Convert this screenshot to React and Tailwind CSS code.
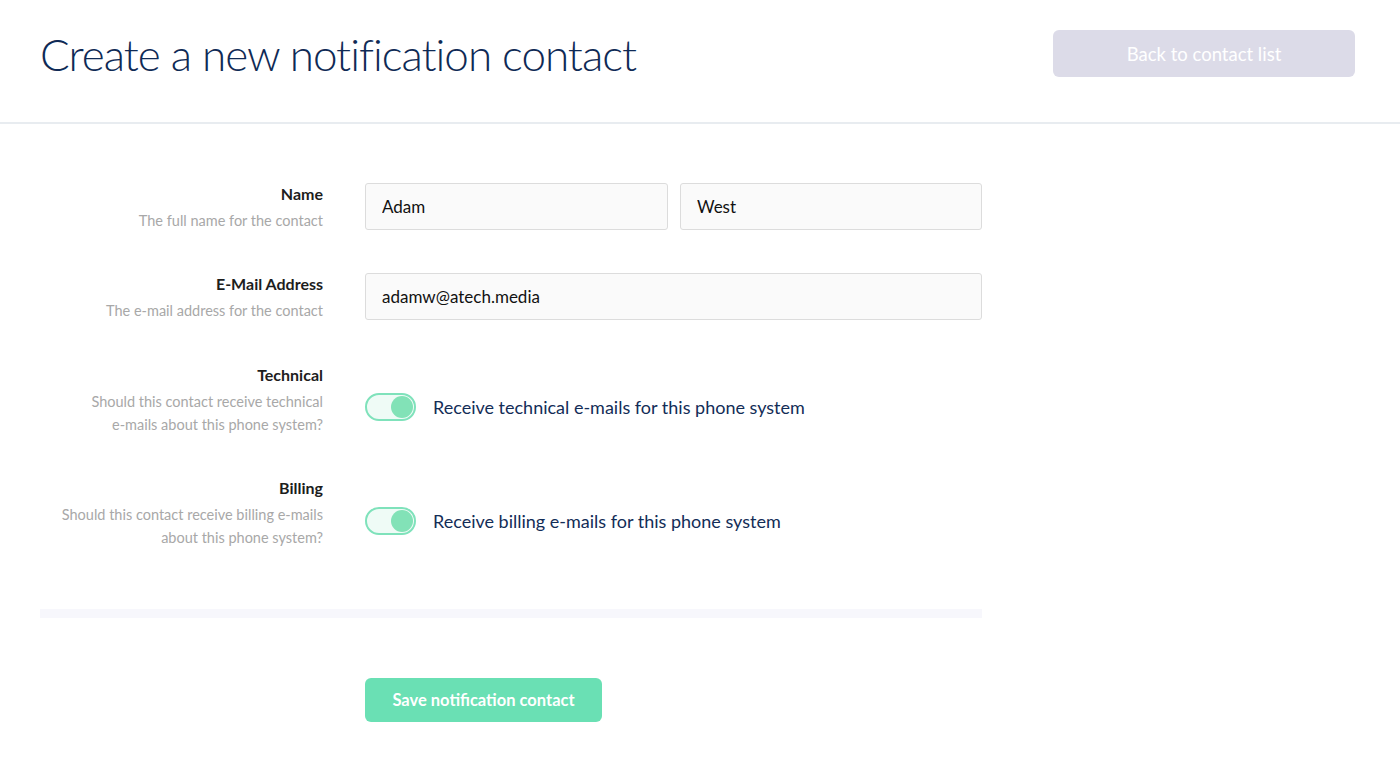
import { useState } from 'react';

const font = { fontFamily: 'Lato, "Open Sans", sans-serif' };

function Toggle({ on, onChange }) {
  return (
    <button
      onClick={onChange}
      className={`relative h-[28px] w-[51px] shrink-0 rounded-full border-2 ${
        on ? 'border-[#7fe2bb] bg-[#effbf6]' : 'border-[#dddde6] bg-[#f5f5f9]'
      }`}
    >
      <span
        className={`absolute top-[1px] h-[22px] w-[22px] rounded-full ${
          on ? 'right-[1px] bg-[#82e2b7]' : 'left-[1px] bg-[#d0d0dc]'
        }`}
      />
    </button>
  );
}

function Label({ title, help }) {
  return (
    <div className="w-[283px] shrink-0 text-right">
      <div className="text-[16px] font-bold leading-[24px] text-[#1d1d1d]">{title}</div>
      <div className="mt-[3px] text-[14.5px] leading-[23px] text-[#a8a8a8]">{help}</div>
    </div>
  );
}

const inputCls =
  'h-[47px] rounded-[3px] border border-[#dcdcdc] bg-[#fafafa] px-[16px] text-[17px] text-[#111] outline-none';

export default function App() {
  const [technical, setTechnical] = useState(true);
  const [billing, setBilling] = useState(true);

  return (
    <div className="min-h-screen bg-white" style={font}>
      {/* Header */}
      <header className="flex h-[124px] items-center justify-between border-b-2 border-[#e8ecf0] pl-[40px] pr-[45px]">
        <h1 className="mt-[-14px] text-[44px] font-light leading-none tracking-[-1px] text-[#0f2a55]">
          Create a new notification contact
        </h1>
        <button className="mt-[-15px] h-[47px] w-[302px] rounded-md bg-[#dcdbe8] pt-[3px] text-[18.5px] text-white">
          Back to contact list
        </button>
      </header>

      <main className="px-[40px] pt-[58px]">
        {/* Name */}
        <div className="flex items-start gap-[42px]">
          <Label title="Name" help="The full name for the contact" />
          <div className="mt-[1px] flex gap-[12px]">
            <input defaultValue="Adam" className={`${inputCls} w-[303px]`} />
            <input defaultValue="West" className={`${inputCls} w-[302px]`} />
          </div>
        </div>

        {/* Email */}
        <div className="mt-[40px] flex items-start gap-[42px]">
          <Label title="E-Mail Address" help="The e-mail address for the contact" />
          <input defaultValue="adamw@atech.media" className={`${inputCls} mt-[1px] w-[617px]`} />
        </div>

        {/* Technical */}
        <div className="mt-[41px] flex items-start gap-[42px]">
          <Label
            title="Technical"
            help={
              <>
                Should this contact receive technical
                <br />
                e-mails about this phone system?
              </>
            }
          />
          <div className="mt-[30px] flex items-center gap-[17px]">
            <Toggle on={technical} onChange={() => setTechnical((v) => !v)} />
            <span className="text-[18px] text-[#132d57]">
              Receive technical e-mails for this phone system
            </span>
          </div>
        </div>

        {/* Billing */}
        <div className="mt-[40px] flex items-start gap-[42px]">
          <Label
            title="Billing"
            help={
              <>
                Should this contact receive billing e-mails
                <br />
                about this phone system?
              </>
            }
          />
          <div className="mt-[31px] flex items-center gap-[17px]">
            <Toggle on={billing} onChange={() => setBilling((v) => !v)} />
            <span className="text-[18px] text-[#132d57]">
              Receive billing e-mails for this phone system
            </span>
          </div>
        </div>

        <div className="mt-[60px] h-[9px] w-[942px] bg-[#f7f7fc]" />

        <div className="mt-[60px] pl-[325px]">
          <button className="h-[44px] w-[237px] rounded-md bg-[#6ae0b4] pt-[1px] text-[16.5px] font-bold text-white">
            Save notification contact
          </button>
        </div>
      </main>
    </div>
  );
}
